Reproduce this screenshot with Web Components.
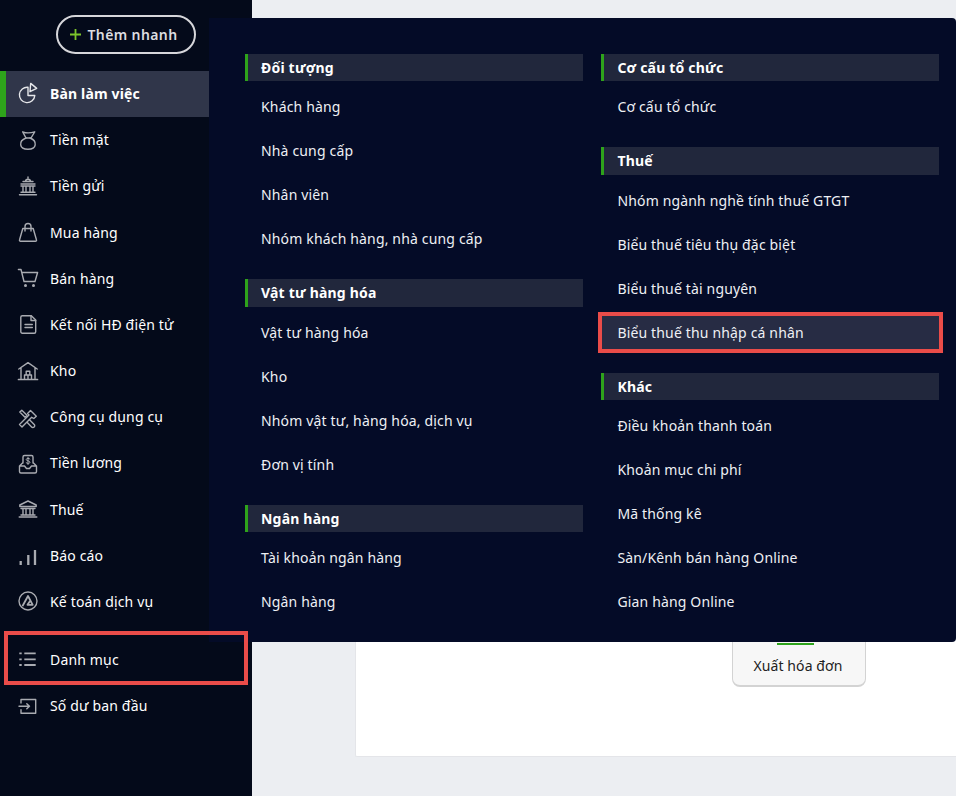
<!DOCTYPE html>
<html lang="vi">
<head>
<meta charset="utf-8">
<title>Danh mục</title>
<style>
  html, body { margin: 0; height: 100%; overflow: hidden; background: #eceef2; font-family: "Noto Sans", sans-serif; }
</style>
</head>
<body>
<app-shell>
  <side-nav slot="nav">
    <quick-add>Thêm nhanh</quick-add>
    <nav-item icon="pie" active>Bàn làm việc</nav-item>
    <nav-item icon="bag">Tiền mặt</nav-item>
    <nav-item icon="deposit">Tiền gửi</nav-item>
    <nav-item icon="shop">Mua hàng</nav-item>
    <nav-item icon="cart">Bán hàng</nav-item>
    <nav-item icon="doc">Kết nối HĐ điện tử</nav-item>
    <nav-item icon="store">Kho</nav-item>
    <nav-item icon="tools">Công cụ dụng cụ</nav-item>
    <nav-item icon="salary">Tiền lương</nav-item>
    <nav-item icon="tax">Thuế</nav-item>
    <nav-item icon="bars">Báo cáo</nav-item>
    <nav-item icon="service">Kế toán dịch vụ</nav-item>
    <nav-item icon="list" marked class="gap">Danh mục</nav-item>
    <nav-item icon="enter">Số dư ban đầu</nav-item>
  </side-nav>
  <main-card></main-card>
  <flyout-menu slot="overlay">
    <div slot="left">
      <menu-group label="Đối tượng">
        <menu-link>Khách hàng</menu-link>
        <menu-link>Nhà cung cấp</menu-link>
        <menu-link>Nhân viên</menu-link>
        <menu-link>Nhóm khách hàng, nhà cung cấp</menu-link>
      </menu-group>
      <menu-group label="Vật tư hàng hóa">
        <menu-link>Vật tư hàng hóa</menu-link>
        <menu-link>Kho</menu-link>
        <menu-link>Nhóm vật tư, hàng hóa, dịch vụ</menu-link>
        <menu-link>Đơn vị tính</menu-link>
      </menu-group>
      <menu-group label="Ngân hàng">
        <menu-link>Tài khoản ngân hàng</menu-link>
        <menu-link>Ngân hàng</menu-link>
      </menu-group>
    </div>
    <div slot="right">
      <menu-group label="Cơ cấu tổ chức">
        <menu-link>Cơ cấu tổ chức</menu-link>
      </menu-group>
      <menu-group label="Thuế">
        <menu-link>Nhóm ngành nghề tính thuế GTGT</menu-link>
        <menu-link>Biểu thuế tiêu thụ đặc biệt</menu-link>
        <menu-link>Biểu thuế tài nguyên</menu-link>
        <menu-link marked>Biểu thuế thu nhập cá nhân</menu-link>
      </menu-group>
      <menu-group label="Khác">
        <menu-link>Điều khoản thanh toán</menu-link>
        <menu-link>Khoản mục chi phí</menu-link>
        <menu-link>Mã thống kê</menu-link>
        <menu-link>Sàn/Kênh bán hàng Online</menu-link>
        <menu-link>Gian hàng Online</menu-link>
      </menu-group>
    </div>
  </flyout-menu>
</app-shell>

<script>
const ICONS = {
  pie: `<path d="M10 4.300a7.700 7.700 0 1 0 6.800 8.200H10z"/><path d="M12.700.4l6 5-6.700 3.300z"/>`,
  bag: `<path d="M4.700 1.800c3 1.300 8 1.300 12 0L13 8H8z"/><path d="M8 8c-4 1.500-5.700 4-5.300 6.800.4 2.900 3 4.400 7.300 4.400s6.800-1.500 7.200-4.400c.4-2.800-1.200-5.300-5.200-6.800"/>`,
  deposit: `<path d="M7.500 5.500c0-3 5-3 5 0M10 1v1.300M5 5.500h10M3 8h14M3 10h14M5 10v6M8 10v6M12 10v6M15 10v6M3 16.300h14M1.500 18.700h17"/>`,
  shop: `<path d="M4.800 6.500h10.400l3.300 11.500a1 1 0 0 1-1 1.300H2.500a1 1 0 0 1-1-1.300z"/><path d="M7 9V4.500a3 3 0 0 1 6 0V9"/>`,
  cart: `<path d="M.4 1.500H3l3 12h11l2.600-9H4"/><circle cx="7.500" cy="17.500" r=".8"/><circle cx="15.500" cy="17.500" r=".8"/>`,
  doc: `<path d="M2.800 3.200a1.500 1.500 0 0 1 1.500-1.500h9l4.400 4.400v11.700a1.500 1.500 0 0 1-1.500 1.500H4.300a1.500 1.500 0 0 1-1.500-1.500z"/><path d="M13 1.700v4.800h4.700M7 10.500h7.300M7 13.500h7.300"/>`,
  store: `<path d="M.8 8L10 1.600 19.200 8M3 7v10.500M17 7v10.500"/><path d="M6.500 18v-4h7v4M10 14v4M8.200 14v-3.800h3.600V14"/><path d="M.5 18.500h19" stroke-width="1.700"/>`,
  tools: `<path d="M1.800 5L3.800 3.200 9 8.300 7 10.300zM11.500 12.800l4.700 4.600a1.800 1.800 0 0 1-2.600 2.500l-4.300-4.500"/><path d="M1.500 17.500L11 8 9.600 6.500 12.500 3.500 18.300 9.200 15.800 11.500 13.700 10.300 4 20z"/>`,
  salary: `<path d="M5 10V4a1.500 1.500 0 0 1 1.500-1.500h7A1.500 1.500 0 0 1 15 4v6M5 9.500L1.500 13v5.500A1.500 1.500 0 0 0 3 20h14a1.500 1.500 0 0 0 1.500-1.500V13L15 9.500M1.500 13h5l2 2.500h3l2-2.500h5"/><path d="M12 6c-.6-.9-3.800-1-3.800.6 0 1.700 3.800.9 3.800 2.600s-3.100 1.500-3.900.5M10 4.300v7.200" stroke-width="1"/>`,
  tax: `<path d="M10 2L1.800 6v1.500h16.400V6zM3 9.500h14M5 9.500v6M8 9.500v6M12 9.500v6M15 9.500v6M3 16h14"/><path d="M1.300 18h17.400" stroke-width="1.600"/>`,
  bars: `<path d="M2.700 16v4M10.300 10v10M17 5v15" stroke-width="2.300" stroke-linecap="butt"/>`,
  service: `<circle cx="10" cy="10" r="9"/><path d="M4.800 14.500L10 5l4.700 8.800H9.500l2.200-3.300" stroke-width="1.800"/>`,
  list: `<path d="M6.300 3.300h11.400M6.300 9.300h11.400M6.300 15h11.400" stroke-width="1.800" stroke-linecap="butt"/><path d="M1.300 3.300h2.400M1.300 9.300h2.400M1.300 15h2.400" stroke-width="1.800" stroke-linecap="butt"/>`,
  enter: `<path d="M3 7V3.500h14.700v13.800H3V13.700M1 10.300h10.500M8.800 7.800l2.700 2.500-2.700 2.500"/>`
};

class AppShell extends HTMLElement {
  constructor() {
    super();
    this.attachShadow({ mode: "open" });
    this.shadowRoot.innerHTML = `
      <style>
        :host { display: flex; position: relative; width: 956px; height: 796px; overflow: hidden; }
      </style>
      <slot name="nav"></slot>
      <slot></slot>
      <slot name="overlay"></slot>`;
  }
}

class SideNav extends HTMLElement {
  constructor() {
    super();
    this.attachShadow({ mode: "open" });
    this.shadowRoot.innerHTML = `
      <style>
        :host { display: flex; flex-direction: column; flex: 0 0 252px; box-sizing: border-box; height: 796px; padding-top: 15px; background: #040a1a; }
      </style>
      <slot></slot>`;
  }
}

class QuickAdd extends HTMLElement {
  constructor() {
    super();
    this.attachShadow({ mode: "open" });
    this.shadowRoot.innerHTML = `
      <style>
        :host { display: flex; align-items: center; justify-content: center; gap: 6px; box-sizing: border-box; width: 140px; height: 39px; margin: 0 0 17px 56px; padding-right: 4px; border: 2px solid #d6d6da; border-radius: 20px; color: #dcdde0; font-size: 14px; font-weight: 600; letter-spacing: .4px; }
        svg { display: block; }
      </style>
      <svg width="11" height="11" viewBox="0 0 11 11"><path d="M5.500 0v11M0 5.500h11" stroke="#7cc52b" stroke-width="1.800" fill="none"/></svg>
      <slot></slot>`;
  }
}

class NavItem extends HTMLElement {
  constructor() {
    super();
    this.attachShadow({ mode: "open" });
    this.shadowRoot.innerHTML = `
      <style>
        :host { display: flex; align-items: center; position: relative; box-sizing: border-box; flex: 0 0 46.18px; width: 209px; padding: 0 0 1.200px 18px; color: #fff; font-size: 14px; letter-spacing: .16px; }
        :host(.gap) { margin-top: 12px; }
        :host([active]) { background: #30364a; border-left: 6px solid #2ea31b; padding-left: 12px; font-weight: 700; }
        :host([marked]) { z-index: 2; }
        svg { display: block; flex: none; margin-right: 12px; fill: none; stroke: #a9abb1; stroke-width: 1.400; stroke-linecap: round; stroke-linejoin: round; overflow: visible; }
        :host([active]) svg { stroke: #e6e7ea; }
        /* red annotation around the item */
        .mark { display: none; position: absolute; left: 4px; top: -6.160px; width: 244px; height: 54px; box-sizing: border-box; border: 4px solid #ea4c49; }
        :host([marked]) .mark { display: block; }
      </style>
      <svg width="20" height="20" viewBox="0 0 20 20">${ICONS[this.getAttribute("icon")] || ""}</svg>
      <slot></slot>
      <span class="mark"></span>`;
  }
}

class FlyoutMenu extends HTMLElement {
  constructor() {
    super();
    this.attachShadow({ mode: "open" });
    this.shadowRoot.innerHTML = `
      <style>
        :host { display: grid; grid-template-columns: 338px 338px; column-gap: 18.400px; position: absolute; z-index: 1; left: 209px; top: 18px; box-sizing: border-box; width: 747px; height: 624px; padding: 36px 0 0 36px; background: #040b27; border-radius: 0 4px 4px 0; }
        ::slotted(div) { display: flex; flex-direction: column; gap: 18px; }
      </style>
      <slot name="left"></slot>
      <slot name="right"></slot>`;
  }
}

class MenuGroup extends HTMLElement {
  constructor() {
    super();
    this.attachShadow({ mode: "open" });
    this.shadowRoot.innerHTML = `
      <style>
        :host { display: block; }
        h3 { margin: 0 0 4px; box-sizing: border-box; height: 27.400px; line-height: 27.400px; padding-left: 13px; border-left: 3px solid #2ea31b; background: #21273c; color: #fff; font-size: 14px; font-weight: 700; letter-spacing: .2px; }
      </style>
      <h3>${this.getAttribute("label")}</h3>
      <slot></slot>`;
  }
}

class MenuLink extends HTMLElement {
  constructor() {
    super();
    this.attachShadow({ mode: "open" });
    this.shadowRoot.innerHTML = `
      <style>
        :host { display: flex; align-items: center; position: relative; isolation: isolate; box-sizing: border-box; height: 44px; padding: 0 0 1.200px 16px; color: #eef0f4; font-size: 14px; letter-spacing: .16px; }
        /* red annotation, with the hover fill inside it */
        .mark { display: none; position: absolute; z-index: -1; left: -3.400px; right: -3.600px; top: 1.200px; height: 41px; box-sizing: border-box; background: #272c44; border: 4px solid #ea4c49; }
        :host([marked]) .mark { display: block; }
      </style>
      <span class="mark"></span>
      <slot></slot>`;
  }
}

class MainCard extends HTMLElement {
  constructor() {
    super();
    this.attachShadow({ mode: "open" });
    this.shadowRoot.innerHTML = `
      <style>
        :host { display: block; flex: 1; box-sizing: border-box; padding: 100px 0 39px 103px; }
        .card { display: flex; justify-content: flex-start; box-sizing: border-box; height: 100%; padding: 400px 0 0 376px; background: #fff; border: 1px solid #e4e5e9; border-right: 0; border-radius: 2px 0 0 2px; }
        .btn { display: flex; flex-direction: column; align-items: center; box-sizing: border-box; width: 134px; height: 186px; margin-bottom: auto; background: #f7f7f7; border: 1px solid #d3d3d3; border-bottom-width: 2px; border-radius: 8px; color: #222; font-size: 14px; letter-spacing: .08px; }
        .bar { width: 37px; height: 2px; margin-top: 141px; margin-left: -8px; background: #2ea31b; }
        .txt { margin: 11px 0 0 -2px; line-height: 20px; }
      </style>
      <div class="card">
        <div class="btn"><span class="bar"></span><span class="txt">Xuất hóa đơn</span></div>
      </div>`;
  }
}

customElements.define("app-shell", AppShell);
customElements.define("side-nav", SideNav);
customElements.define("quick-add", QuickAdd);
customElements.define("nav-item", NavItem);
customElements.define("flyout-menu", FlyoutMenu);
customElements.define("menu-group", MenuGroup);
customElements.define("menu-link", MenuLink);
customElements.define("main-card", MainCard);
</script>
</body>
</html>
